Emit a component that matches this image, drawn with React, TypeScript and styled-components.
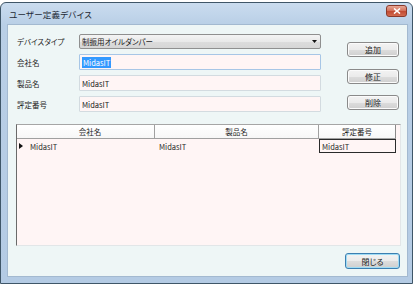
import React from "react"
import styled, { createGlobalStyle } from "styled-components"

const GlobalStyle = createGlobalStyle`
	html, body {
		margin: 0;
		padding: 0;
		background: #ffffff;
	}
	body {
		font-family: "Noto Sans CJK JP", "Noto Sans", sans-serif;
		font-feature-settings: "palt";
		color: #1b1b1b;
	}
`

const Window = styled.div`
	box-sizing: border-box;
	width: 413px;
	height: 282px;
	margin-top: 2px;
	border: 1px solid #3f5668;
	border-radius: 6px 6px 0 0;
	background: linear-gradient(#cadcef, #b9cfe6 22px, #b4cbe4);
	padding: 0 4px 6px 6px;
	display: flex;
	flex-direction: column;
`

const TitleBar = styled.div`
	height: 21px;
	display: flex;
	align-items: center;
	justify-content: space-between;
	padding-left: 2px;
`

const Title = styled.span`
	font-size: 8.5px;
	color: #1e2a36;
	letter-spacing: 0.2px;
`

const CloseBox = styled.div`
	width: 19px;
	height: 10px;
	margin-right: 1px;
	margin-top: -5px;
	border: 1px solid #8a3a2c;
	border-radius: 3px;
	background: linear-gradient(#e8a796, #d4735d 45%, #c24c34 55%, #d26a4f);
	display: flex;
	align-items: center;
	justify-content: center;
`

const Client = styled.div`
	flex: 1;
	border: 1px solid #a3b9d0;
	background: #eef6f6;
	padding: 9px 6px 0 8px;
	display: flex;
	flex-direction: column;
`

const FormArea = styled.div`
	display: flex;
`

const Fields = styled.div`
	display: flex;
	flex-direction: column;
	gap: 5px;
`

const FieldRow = styled.div`
	display: flex;
	align-items: center;
`

const Label = styled.span`
	width: 62px;
	padding-left: 1px;
	font-size: 7.5px;
	color: #222;
`

const Combo = styled.div`
	box-sizing: border-box;
	width: 242px;
	height: 15px;
	border: 1px solid #8f8f8f;
	border-radius: 2px;
	background: linear-gradient(#f4f4f4, #e9e9e9 50%, #dcdcdc 51%, #d6d6d6);
	display: flex;
	align-items: center;
	justify-content: space-between;
	padding: 0 3px 0 2px;
	font-size: 7.5px;
`

const TextBox = styled.div<{ focused?: boolean }>`
	box-sizing: border-box;
	width: 242px;
	height: 16px;
	border: 1px solid ${p => (p.focused ? "#a7c6e6" : "#d3dbe0")};
	border-radius: 1px;
	background: #fff5f5;
	display: flex;
	align-items: center;
	padding-left: 2px;
	font-size: 7.5px;
`

const Selected = styled.span`
	background: #3399ff;
	color: #ffffff;
	padding: 0 1px;
`

const SideButtons = styled.div`
	margin-left: 26px;
	margin-top: 8px;
	display: flex;
	flex-direction: column;
	gap: 11.5px;
`

const Button = styled.div<{ primary?: boolean }>`
	box-sizing: border-box;
	width: 52px;
	height: 15px;
	border: 1px solid ${p => (p.primary ? "#3c7fb1" : "#8a8a8a")};
	border-radius: 3px;
	background: linear-gradient(#f3f3f3, #ebebeb 50%, #dddddd 51%, #cfcfcf);
	box-shadow: ${p => (p.primary ? "inset 0 0 0 1px #9fdcf5" : "inset 0 0 0 1px #fbfbfb")};
	display: flex;
	align-items: center;
	justify-content: center;
	font-size: 8px;
	color: #1b1b1b;
`

const DataGrid = styled.div`
	margin-top: 12px;
	height: 122px;
	box-sizing: border-box;
	border-top: 1px solid #a5a5a5;
	border-left: 1px solid #6a6a6a;
	border-right: 1px solid #e2e6e8;
	border-bottom: 1px solid #e2e6e8;
	background: #fff5f5;
	display: grid;
	grid-template-columns: 9px 129px 164px 77px 1fr;
	grid-template-rows: 14px 14px 1fr;
	font-size: 7px;
`

const HeaderCell = styled.div<{ last?: boolean }>`
	background: linear-gradient(#ffffff, #f7f7f7);
	border-bottom: 1px solid #a0a0a0;
	border-right: 1px solid ${p => (p.last ? "#8a8a8a" : "#a0a0a0")};
	display: flex;
	align-items: center;
	justify-content: center;
	font-size: 7.5px;
`

const CornerCell = styled.div`
	background: linear-gradient(#ffffff, #f7f7f7);
	border-bottom: 1px solid #a0a0a0;
`

const HeaderFill = styled.div`
	border-bottom: 1px solid transparent;
`

const RowHeader = styled.div`
	display: flex;
	align-items: center;
	padding-left: 2px;
`

const Cell = styled.div<{ current?: boolean }>`
	box-sizing: border-box;
	display: flex;
	align-items: center;
	padding-left: ${p => (p.current ? "2px" : "4px")};
	border: ${p => (p.current ? "1px solid #2a2a2a" : "none")};
	font-size: 7.5px;
	color: #2a2a2a;
`

const Footer = styled.div`
	margin-top: 7px;
	display: flex;
	justify-content: flex-end;
	padding-right: 1px;
`

const FooterButton = styled(Button)`
	width: 55px;
	height: 16px;
`

const App = () => (
	<>
		<GlobalStyle />
		<Window>
			<TitleBar>
				<Title>ユーザー定義デバイス</Title>
				<CloseBox>
					<svg width="8" height="6" viewBox="0 0 8 6">
						<path d="M1 0.5 L7 5.5 M7 0.5 L1 5.5" stroke="#ffffff" strokeWidth="1.6" />
					</svg>
				</CloseBox>
			</TitleBar>
			<Client>
				<FormArea>
					<Fields>
						<FieldRow>
							<Label>デバイスタイプ</Label>
							<Combo>
								<span>制振用オイルダンパー</span>
								<svg width="5" height="3" viewBox="0 0 5 3">
									<polygon points="0,0 5,0 2.5,3" fill="#111" />
								</svg>
							</Combo>
						</FieldRow>
						<FieldRow>
							<Label>会社名</Label>
							<TextBox focused>
								<Selected>MidasIT</Selected>
							</TextBox>
						</FieldRow>
						<FieldRow>
							<Label>製品名</Label>
							<TextBox>MidasIT</TextBox>
						</FieldRow>
						<FieldRow>
							<Label>評定番号</Label>
							<TextBox>MidasIT</TextBox>
						</FieldRow>
					</Fields>
					<SideButtons>
						<Button>追加</Button>
						<Button>修正</Button>
						<Button>削除</Button>
					</SideButtons>
				</FormArea>
				<DataGrid>
					<CornerCell />
					<HeaderCell>会社名</HeaderCell>
					<HeaderCell>製品名</HeaderCell>
					<HeaderCell last>評定番号</HeaderCell>
					<HeaderFill />
					<RowHeader>
						<svg width="4" height="6" viewBox="0 0 4 6">
							<polygon points="0,0 4,3 0,6" fill="#111" />
						</svg>
					</RowHeader>
					<Cell>MidasIT</Cell>
					<Cell>MidasIT</Cell>
					<Cell current>MidasIT</Cell>
					<div />
				</DataGrid>
				<Footer>
					<FooterButton primary>閉じる</FooterButton>
				</Footer>
			</Client>
		</Window>
	</>
)

export default App
